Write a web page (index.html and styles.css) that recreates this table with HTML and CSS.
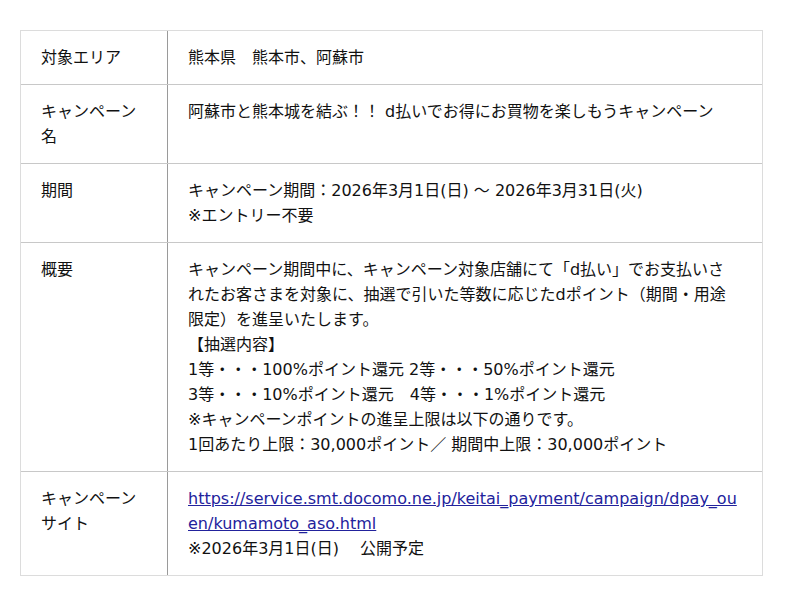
FILE: index.html
```html
<!DOCTYPE html>
<html lang="ja">
<head>
<meta charset="utf-8">
<link rel="stylesheet" href="styles.css">
</head>
<body>
<div class="wrap">
  <div class="tbl">
    <div class="row">
      <div class="lbl">対象エリア</div>
      <div class="val">熊本県　熊本市、阿蘇市</div>
    </div>
    <div class="row">
      <div class="lbl">キャンペーン名</div>
      <div class="val">阿蘇市と熊本城を結ぶ！！ d払いでお得にお買物を楽しもうキャンペーン</div>
    </div>
    <div class="row">
      <div class="lbl">期間</div>
      <div class="val">キャンペーン期間：2026年3月1日(日) 〜 2026年3月31日(火)<br>※エントリー不要</div>
    </div>
    <div class="row">
      <div class="lbl">概要</div>
      <div class="val">キャンペーン期間中に、キャンペーン対象店舗にて「d払い」でお支払いされたお客さまを対象に、抽選で引いた等数に応じたdポイント（期間・用途限定）を進呈いたします。<br>【抽選内容】<br>1等・・・100%ポイント還元 2等・・・50%ポイント還元<br>3等・・・10%ポイント還元　4等・・・1%ポイント還元<br>※キャンペーンポイントの進呈上限は以下の通りです。<br>1回あたり上限：30,000ポイント／ 期間中上限：30,000ポイント</div>
    </div>
    <div class="row">
      <div class="lbl">キャンペーンサイト</div>
      <div class="val"><a class="link" href="#">https://service.smt.docomo.ne.jp/keitai_payment/campaign/dpay_ouen/kumamoto_aso.html</a><br>※2026年3月1日(日)　 公開予定</div>
    </div>
  </div>
</div>
</body>
</html>
```

FILE: styles.css
```css
html, body {
  margin: 0;
  padding: 0;
  background: #fff;
}
body {
  font-family: "DejaVu Sans", "Noto Sans CJK JP", sans-serif;
  font-size: 16px;
  line-height: 25px;
  color: #111;
}
.wrap {
  padding: 30px 20px;
}
.tbl {
  width: 743px;
  box-sizing: border-box;
  border: 1px solid #dcdcdc;
}
.row {
  display: grid;
  grid-template-columns: 147px 1fr;
}
.row + .row {
  border-top: 1px solid #c8c8c8;
}
.lbl {
  padding: 14px 20px;
  border-right: 1px solid #9a9a9a;
}
.val {
  padding: 14px 22px 14px 20px;
  word-break: break-all;
  line-break: strict;
}
.row:nth-child(4) .val {
  word-break: normal;
}
.link {
  color: #22229c;
  text-decoration: underline;
}
```
